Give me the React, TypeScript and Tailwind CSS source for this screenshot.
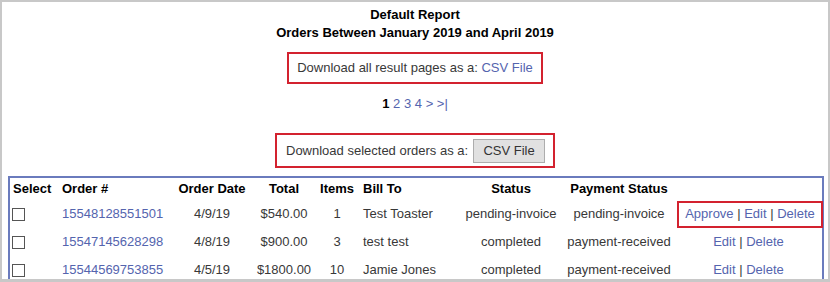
import React from "react";

const LINK = "text-[#5464ae]";

const rows = [
  {
    id: "15548128551501",
    date: "4/9/19",
    total: "$540.00",
    items: "1",
    bill: "Test Toaster",
    status: "pending-invoice",
    pay: "pending-invoice",
    approve: true,
  },
  {
    id: "15547145628298",
    date: "4/8/19",
    total: "$900.00",
    items: "3",
    bill: "test test",
    status: "completed",
    pay: "payment-received",
    approve: false,
  },
  {
    id: "15544569753855",
    date: "4/5/19",
    total: "$1800.00",
    items: "10",
    bill: "Jamie Jones",
    status: "completed",
    pay: "payment-received",
    approve: false,
  },
];

export default function App() {
  return (
    <div
      className="w-[830px] h-[282px] overflow-hidden bg-white border-t-2 border-l-2 border-r-2 border-b-[3px] border-[#c8c8c8] text-[13px] text-[#383838]"
      style={{ fontFamily: '"Liberation Sans", Arial, sans-serif' }}
    >
      <div className="flex flex-col items-center pt-[4px]">
        <div className="font-bold text-black leading-[18px]">Default Report</div>
        <div className="font-bold text-black leading-[18px]">
          Orders Between January 2019 and April 2019
        </div>
        <div className="mt-[10px] w-[256px] h-[32px] border-2 border-[#d3222f] flex items-center justify-center whitespace-nowrap">
          <span>
            Download all result pages as a: <a className={LINK}>CSV File</a>
          </span>
        </div>
        <div className="mt-[11px] leading-[18px]">
          <span className="font-bold text-black">1</span>{" "}
          <a className={LINK}>2</a> <a className={LINK}>3</a>{" "}
          <a className={LINK}>4</a> <a className={LINK}>&gt;</a>{" "}
          <a className={LINK}>&gt;|</a>
        </div>
        <div className="mt-[20px] w-[280px] h-[35px] border-2 border-[#d3222f] flex items-center pl-[9px] pr-[7px] whitespace-nowrap">
          <span className="shrink-0">Download selected orders as a:</span>
          <button className="shrink-0 ml-[5px] w-[72px] h-[24px] bg-[#e1e1e1] border border-[#adadad] text-[#333333] text-[13px]">
            CSV File
          </button>
        </div>
      </div>
      <div className="mt-[8px] ml-[6px] w-[816px] border-t-2 border-l-2 border-r-2 border-[#6a7bbd]">
        <table className="table-fixed border-collapse w-[812px]">
          <colgroup>
            <col className="w-[49px]" />
            <col className="w-[111px]" />
            <col className="w-[84px]" />
            <col className="w-[60px]" />
            <col className="w-[46px]" />
            <col className="w-[99px]" />
            <col className="w-[104px]" />
            <col className="w-[112px]" />
            <col className="w-[147px]" />
          </colgroup>
          <thead>
            <tr className="h-[22px] font-bold text-black">
              <th className="text-left pl-[3px] p-0">Select</th>
              <th className="text-left pl-[3px] p-0">Order #</th>
              <th className="text-center p-0">Order Date</th>
              <th className="text-center p-0">Total</th>
              <th className="text-center p-0">Items</th>
              <th className="text-left pl-[3px] p-0">Bill To</th>
              <th className="text-center p-0">Status</th>
              <th className="text-center p-0">Payment Status</th>
              <th className="p-0"></th>
            </tr>
          </thead>
          <tbody>
            {rows.map((r) => (
              <tr key={r.id} className="h-[28px]">
                <td className="pl-[2px] p-0">
                  <span className="block w-[13px] h-[13px] border border-[#555555] bg-white" />
                </td>
                <td className="text-left pl-[3px] p-0">
                  <a className={LINK}>{r.id}</a>
                </td>
                <td className="text-center p-0">{r.date}</td>
                <td className="text-center p-0">{r.total}</td>
                <td className="text-center p-0">{r.items}</td>
                <td className="text-left pl-[3px] p-0 whitespace-nowrap">{r.bill}</td>
                <td className="text-center p-0">{r.status}</td>
                <td className="text-center p-0">{r.pay}</td>
                <td className="text-center p-0">
                  {r.approve ? (
                    <div className="ml-[2px] -mr-[1px] h-[27px] border-2 border-[#d3222f] flex items-center justify-center">
                      <span>
                        <a className={LINK}>Approve</a> | <a className={LINK}>Edit</a> |{" "}
                        <a className={LINK}>Delete</a>
                      </span>
                    </div>
                  ) : (
                    <span>
                      <a className={LINK}>Edit</a> | <a className={LINK}>Delete</a>
                    </span>
                  )}
                </td>
              </tr>
            ))}
          </tbody>
        </table>
      </div>
    </div>
  );
}
